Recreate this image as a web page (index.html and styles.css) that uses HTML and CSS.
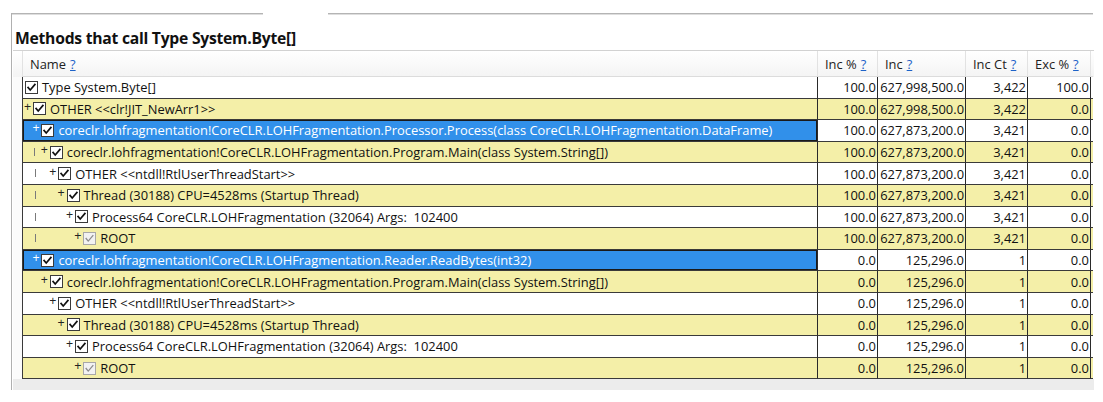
FILE: index.html
```html
<!DOCTYPE html>
<html>
<head>
<meta charset="utf-8">
<link rel="stylesheet" href="styles.css">
</head>
<body>
<div class="frame">
  <div class="topline"><span class="seg seg-a"></span><span class="seg seg-b"></span></div>
  <h1 class="title">Methods that call Type System.Byte[]</h1>
  <div class="grid">
    <div class="row head">
      <div class="gut"></div>
      <div class="hc">Name <a class="q">?</a></div>
      <div class="hc">Inc % <a class="q">?</a></div>
      <div class="hc">Inc <a class="q">?</a></div>
      <div class="hc">Inc Ct <a class="q">?</a></div>
      <div class="hc">Exc % <a class="q">?</a></div>
      <div class="hc last"></div>
    </div>

    <div class="row white">
      <div class="gut"></div>
      <div class="name"><span class="cb"><svg viewBox="0 0 13 13"><polyline points="2.5,6.5 5,9.5 10.5,3"/></svg></span><span class="txt">Type System.Byte[]</span></div>
      <div class="num">100.0</div><div class="num">627,998,500.0</div><div class="num">3,422</div><div class="num">100.0</div><div class="num extra">6</div>
    </div>

    <div class="row yellow">
      <div class="gut"></div>
      <div class="name"><span class="pl">+</span><span class="cb"><svg viewBox="0 0 13 13"><polyline points="2.5,6.5 5,9.5 10.5,3"/></svg></span><span class="txt">OTHER &lt;&lt;clr!JIT_NewArr1&gt;&gt;</span></div>
      <div class="num">100.0</div><div class="num">627,998,500.0</div><div class="num">3,422</div><div class="num">0.0</div><div class="num extra"></div>
    </div>

    <div class="row white selected">
      <div class="gut"></div>
      <div class="name"><span class="ind"></span><span class="pl">+</span><span class="cb"><svg viewBox="0 0 13 13"><polyline points="2.5,6.5 5,9.5 10.5,3"/></svg></span><span class="txt">coreclr.lohfragmentation!CoreCLR.LOHFragmentation.Processor.Process(class CoreCLR.LOHFragmentation.DataFrame)</span></div>
      <div class="num">100.0</div><div class="num">627,873,200.0</div><div class="num">3,421</div><div class="num">0.0</div><div class="num extra"></div>
    </div>

    <div class="row yellow">
      <div class="gut"></div>
      <div class="name"><span class="ind"></span><span class="ind bar b1"></span><span class="pl">+</span><span class="cb"><svg viewBox="0 0 13 13"><polyline points="2.5,6.5 5,9.5 10.5,3"/></svg></span><span class="txt">coreclr.lohfragmentation!CoreCLR.LOHFragmentation.Program.Main(class System.String[])</span></div>
      <div class="num">100.0</div><div class="num">627,873,200.0</div><div class="num">3,421</div><div class="num">0.0</div><div class="num extra"></div>
    </div>

    <div class="row white">
      <div class="gut"></div>
      <div class="name"><span class="ind"></span><span class="ind bar"></span><span class="ind"></span><span class="pl">+</span><span class="cb"><svg viewBox="0 0 13 13"><polyline points="2.5,6.5 5,9.5 10.5,3"/></svg></span><span class="txt">OTHER &lt;&lt;ntdll!RtlUserThreadStart&gt;&gt;</span></div>
      <div class="num">100.0</div><div class="num">627,873,200.0</div><div class="num">3,421</div><div class="num">0.0</div><div class="num extra"></div>
    </div>

    <div class="row yellow">
      <div class="gut"></div>
      <div class="name"><span class="ind"></span><span class="ind bar"></span><span class="ind"></span><span class="ind"></span><span class="pl">+</span><span class="cb"><svg viewBox="0 0 13 13"><polyline points="2.5,6.5 5,9.5 10.5,3"/></svg></span><span class="txt">Thread (30188) CPU=4528ms (Startup Thread)</span></div>
      <div class="num">100.0</div><div class="num">627,873,200.0</div><div class="num">3,421</div><div class="num">0.0</div><div class="num extra"></div>
    </div>

    <div class="row white">
      <div class="gut"></div>
      <div class="name"><span class="ind"></span><span class="ind bar"></span><span class="ind"></span><span class="ind"></span><span class="ind"></span><span class="pl">+</span><span class="cb"><svg viewBox="0 0 13 13"><polyline points="2.5,6.5 5,9.5 10.5,3"/></svg></span><span class="txt">Process64 CoreCLR.LOHFragmentation (32064) Args:&nbsp; 102400</span></div>
      <div class="num">100.0</div><div class="num">627,873,200.0</div><div class="num">3,421</div><div class="num">0.0</div><div class="num extra"></div>
    </div>

    <div class="row yellow">
      <div class="gut"></div>
      <div class="name"><span class="ind"></span><span class="ind bar"></span><span class="ind"></span><span class="ind"></span><span class="ind"></span><span class="ind"></span><span class="pl">+</span><span class="cb dis"><svg viewBox="0 0 13 13"><polyline points="2.5,6.5 5,9.5 10.5,3"/></svg></span><span class="txt">ROOT</span></div>
      <div class="num">100.0</div><div class="num">627,873,200.0</div><div class="num">3,421</div><div class="num">0.0</div><div class="num extra"></div>
    </div>

    <div class="row white selected">
      <div class="gut"></div>
      <div class="name"><span class="ind"></span><span class="pl">+</span><span class="cb"><svg viewBox="0 0 13 13"><polyline points="2.5,6.5 5,9.5 10.5,3"/></svg></span><span class="txt">coreclr.lohfragmentation!CoreCLR.LOHFragmentation.Reader.ReadBytes(int32)</span></div>
      <div class="num">0.0</div><div class="num">125,296.0</div><div class="num">1</div><div class="num">0.0</div><div class="num extra"></div>
    </div>

    <div class="row yellow">
      <div class="gut"></div>
      <div class="name"><span class="ind"></span><span class="ind"></span><span class="pl">+</span><span class="cb"><svg viewBox="0 0 13 13"><polyline points="2.5,6.5 5,9.5 10.5,3"/></svg></span><span class="txt">coreclr.lohfragmentation!CoreCLR.LOHFragmentation.Program.Main(class System.String[])</span></div>
      <div class="num">0.0</div><div class="num">125,296.0</div><div class="num">1</div><div class="num">0.0</div><div class="num extra"></div>
    </div>

    <div class="row white">
      <div class="gut"></div>
      <div class="name"><span class="ind"></span><span class="ind"></span><span class="ind"></span><span class="pl">+</span><span class="cb"><svg viewBox="0 0 13 13"><polyline points="2.5,6.5 5,9.5 10.5,3"/></svg></span><span class="txt">OTHER &lt;&lt;ntdll!RtlUserThreadStart&gt;&gt;</span></div>
      <div class="num">0.0</div><div class="num">125,296.0</div><div class="num">1</div><div class="num">0.0</div><div class="num extra"></div>
    </div>

    <div class="row yellow">
      <div class="gut"></div>
      <div class="name"><span class="ind"></span><span class="ind"></span><span class="ind"></span><span class="ind"></span><span class="pl">+</span><span class="cb"><svg viewBox="0 0 13 13"><polyline points="2.5,6.5 5,9.5 10.5,3"/></svg></span><span class="txt">Thread (30188) CPU=4528ms (Startup Thread)</span></div>
      <div class="num">0.0</div><div class="num">125,296.0</div><div class="num">1</div><div class="num">0.0</div><div class="num extra"></div>
    </div>

    <div class="row white">
      <div class="gut"></div>
      <div class="name"><span class="ind"></span><span class="ind"></span><span class="ind"></span><span class="ind"></span><span class="ind"></span><span class="pl">+</span><span class="cb"><svg viewBox="0 0 13 13"><polyline points="2.5,6.5 5,9.5 10.5,3"/></svg></span><span class="txt">Process64 CoreCLR.LOHFragmentation (32064) Args:&nbsp; 102400</span></div>
      <div class="num">0.0</div><div class="num">125,296.0</div><div class="num">1</div><div class="num">0.0</div><div class="num extra"></div>
    </div>

    <div class="row yellow">
      <div class="gut"></div>
      <div class="name"><span class="ind"></span><span class="ind"></span><span class="ind"></span><span class="ind"></span><span class="ind"></span><span class="ind"></span><span class="pl">+</span><span class="cb dis"><svg viewBox="0 0 13 13"><polyline points="2.5,6.5 5,9.5 10.5,3"/></svg></span><span class="txt">ROOT</span></div>
      <div class="num">0.0</div><div class="num">125,296.0</div><div class="num">1</div><div class="num">0.0</div><div class="num extra"></div>
    </div>

    <div class="hscroll"></div>
  </div>
</div>
</body>
</html>
```

FILE: styles.css
```css
* { box-sizing: border-box; }

html, body {
  margin: 0;
  padding: 0;
  background: #ffffff;
}

body {
  font-family: "Open Sans", "Noto Sans", "Liberation Sans", sans-serif;
  font-size: 12.9px;
  color: #111;
}

.frame {
  margin: 13px 0 0 11px;
  width: 1082px;
  height: 377px;
  border-left: 1px solid #b0b0b0;
  display: flex;
  flex-direction: column;
}

.topline {
  display: flex;
  gap: 65px;
  height: 2px;
}

.seg {
  display: block;
  height: 2px;
  background: #b4b4b4;
  border-bottom: 1px solid #dedede;
}

.seg-a { width: 251px; }
.seg-b { flex: 1; }

.title {
  margin: 14px 0 0 3px;
  height: 19px;
  font-size: 15.7px;
  line-height: 19px;
  font-weight: 700;
  color: #111;
  letter-spacing: -0.25px;
}

.grid {
  margin: 2px 0 0 1px;
  width: 1081px;
  border-top: 1px solid #d2d2d2;
  display: flex;
  flex-direction: column;
}

.row {
  display: grid;
  grid-template-columns: 9px 795px 60px 88px 62px 63px 3px;
  height: 21.6px;
  align-items: stretch;
}

.row > div {
  display: flex;
  align-items: center;
  overflow: hidden;
  white-space: nowrap;
  border-bottom: 1px solid #3a3a3a;
}

.row > .gut {
  background: #fbfbfb;
  border-bottom: 0;
}

.head {
  height: 26px;
  background: linear-gradient(#ffffff, #f4f4f4);
}

.head > div {
  border-bottom: 1px solid #dcdcdc;
}

.head > .gut {
  background: transparent;
}

.hc {
  padding-left: 7px;
  border-left: 1px solid #e2e2e2;
  color: #222;
}

.hc.last { padding-left: 0; }

.q {
  color: #1d62c8;
  text-decoration: underline;
  margin-left: 4px;
}

.name {
  border-left: 1px solid #3a3a3a;
  padding-left: 2px;
}

.num {
  justify-content: flex-end;
  padding-right: 1px;
  border-left: 1px solid #2a2a2a;
  background: #ffffff;
  color: #111;
}

.num.extra {
  justify-content: flex-start;
  padding: 0 0 0 2px;
}

.yellow .name,
.yellow .num {
  background: #f4efa8;
}

.white .name {
  background: #ffffff;
}

.selected .name {
  background: #3190ea;
  color: #ffffff;
  box-shadow: inset 0 0 0 1px #1a1a1a;
}

.selected .num {
  background: #ffffff;
}

.ind {
  display: inline-block;
  width: 8.4px;
  flex: none;
  align-self: stretch;
  position: relative;
}

.bar::before {
  content: "";
  position: absolute;
  left: 2px;
  top: 6px;
  width: 1px;
  height: 8px;
  background: #7a7a7a;
}

.b1::before { left: 1px; }

.pl {
  flex: none;
  width: 8px;
  font-size: 12.5px;
  line-height: 12px;
  position: relative;
  top: -2px;
  left: -1px;
  color: #222;
}

.selected .pl { color: #ffffff; }

.cb {
  flex: none;
  width: 13px;
  height: 13px;
  border: 1px solid #3a3a3a;
  background: #ffffff;
  margin-right: 4px;
  display: flex;
}

.cb svg {
  width: 11px;
  height: 11px;
  fill: none;
  stroke: #111;
  stroke-width: 2;
  stroke-linecap: square;
}

.cb.dis {
  border-color: #a8a8a8;
  background: #f2f2f2;
}

.cb.dis svg {
  stroke: #8c8c8c;
  stroke-width: 1.5;
}

.txt {
  flex: none;
}

.hscroll {
  height: 11px;
  background: #ececec;
}
```
